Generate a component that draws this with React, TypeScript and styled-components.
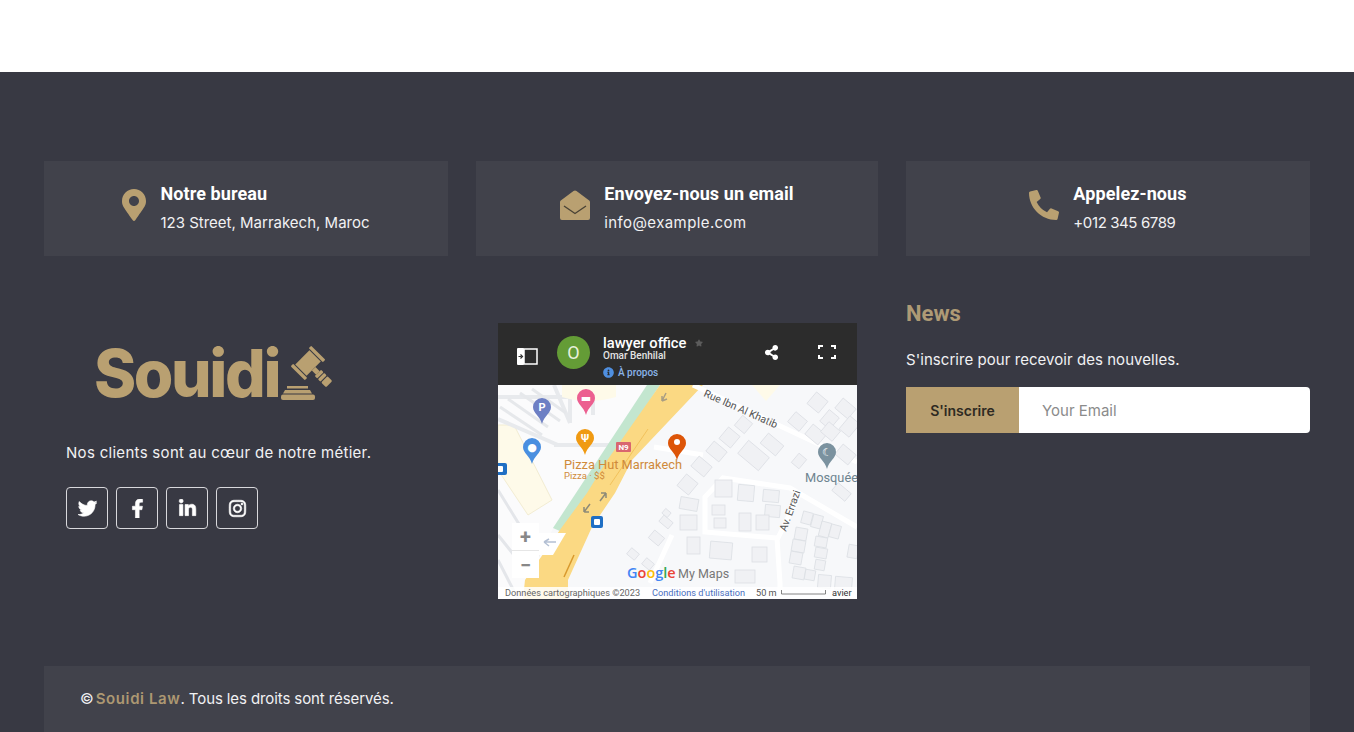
import React from 'react';
import styled, {createGlobalStyle} from 'styled-components';
import {
  FaMapMarkerAlt,
  FaPhoneAlt,
  FaTwitter,
  FaFacebookF,
  FaLinkedinIn,
  FaInstagram,
  FaStar,
  FaShareAlt,
  FaInfoCircle,
} from 'react-icons/fa';

const GOLD = '#b9a071';

const MailIcon: React.FC = () => (
  <svg width="30" height="30" viewBox="0 0 30 30">
    <path
      d="M13.500 1 .8 10.500Q0 11 0 12V28q0 2 2 2H28q2 0 2-2V12q0-1-.8-1.500L16.500 1Q15 0 13.500 1Z"
      fill={GOLD}
    />
    <path d="M4 16 15 23.500 26 16" fill="none" stroke="#4a4336" strokeWidth="1.400" />
  </svg>
);

const infoItems = [
  {icon: <FaMapMarkerAlt size={32} />, iconWidth: 24, title: 'Notre bureau', text: '123 Street, Marrakech, Maroc', spacing: 0},
  {icon: <MailIcon />, iconWidth: 30, title: 'Envoyez-nous un email', text: 'info@example.com', spacing: 0.4},
  {icon: <FaPhoneAlt size={30} />, iconWidth: 30, title: 'Appelez-nous', text: '+012 345 6789', spacing: -0.4},
];

// buildings of the map: x, y, w, h, rotation
const buildings = [
  [217, 95, 17, 17, 0], [240, 100, 16, 16, 5], [265, 105, 16, 12, 5], [267, 120, 15, 12, 5], [214, 120, 13, 10, 0],
  [216, 133, 12, 10, 0], [241, 128, 12, 18, 0], [258, 130, 13, 15, 0], [182, 130, 17, 15, 0], [182, 113, 18, 12, 10],
  [182, 92, 15, 15, 40], [195, 75, 17, 13, 40], [212, 157, 22, 17, 5], [254, 162, 15, 15, 0], [189, 152, 13, 17, 0],
  [152, 148, 13, 10, 40], [162, 133, 12, 8, 40], [165, 125, 7, 6, 40], [237, 185, 20, 13, 0],
  [304, 127, 10, 12, 15], [314, 130, 10, 13, 15], [322, 137, 10, 15, 15], [332, 140, 10, 13, 15], [297, 143, 12, 12, 10],
  [294, 155, 13, 12, 10], [292, 167, 12, 12, 10], [317, 152, 12, 10, 10], [317, 163, 12, 10, 10], [317, 175, 10, 10, 10],
  [295, 182, 12, 12, 10], [307, 185, 10, 10, 10], [320, 190, 13, 13, 5], [337, 192, 17, 13, 5], [350, 160, 10, 13, 10],
  [335, 102, 17, 10, 40], [224, 45, 15, 15, 40], [210, 60, 17, 13, 40], [239, 33, 13, 13, 40], [264, 53, 20, 13, 40],
  [242, 62, 27, 17, 40], [292, 30, 15, 13, 40], [312, 10, 15, 15, 40], [339, 17, 17, 13, 40], [325, 27, 13, 15, 40],
  [309, 43, 17, 13, 40], [325, 40, 15, 13, 40], [345, 33, 13, 17, 40], [339, 63, 17, 13, 40], [296, 70, 10, 12, 40],
  [130, 165, 10, 8, 40], [145, 175, 10, 8, 40],
];

const Pin: React.FC<{x: number; y: number; color: string; glyph?: string}> = ({x, y, color, glyph}) => (
  <g transform={`translate(${x} ${y})`}>
    <path d="M0 17C-2 9-9 6-9 0a9 9 0 0 1 18 0C9 6 2 9 0 17Z" fill={color} />
    {glyph ? (
      <MapGlyph x="0" y="4" fill="#fff">
        {glyph}
      </MapGlyph>
    ) : (
      <circle cx="0" cy="-1" r="3" fill="#fff" />
    )}
  </g>
);

const MapDrawing: React.FC = () => (
  <MapSvg viewBox="0 0 359 214">
    <rect width="359" height="214" fill="#f7f8fa" />
    {/* left block with parking */}
    <path d="M0 0H149L55 143 25 214H0Z" fill="#fbfbfc" />
    <path d="M0 40 16 40 54 115 30 130 0 85Z" fill="#fefae9" stroke="#f2ecd2" />
    <path d="M0 12H72V38M95 0V30M0 34 60 60M56 0 72 38M56 60H125" fill="none" stroke="#e8eaed" strokeWidth="4" />
    <path d="M0 105 40 170 30 214M0 175 20 214M0 150 32 190" fill="none" stroke="#e4e6ea" strokeWidth="3" />
    <path d="M10 14 50 42M22 8 62 36M34 4 68 28M2 22 44 50" stroke="#e6e8eb" strokeWidth="3" fill="none" />
    <path d="M64 0H118V12Q90 20 64 12Z" fill="#fefae9" />
    <path d="M254 0H282L268 16Z" fill="#fefae9" />
    {/* green strip and yellow road */}
    <path d="M149 0H162L64 147 55 143Z" fill="#c3e6cf" />
    <path d="M162 0H205L134 75 117 108 94 142 70 195V214H25L27 195 64 142 89 108 108 77Z" fill="#fbd983" />
    <path d="M150 44 112 100" stroke="#f2c25c" strokeWidth="1" />
    <path d="M76 170 66 192" stroke="#d8992d" strokeWidth="1.500" />
    <path d="M168 8 164 16M164 16l0-5M164 16l5-2" stroke="#a89d83" strokeWidth="1.500" fill="none" />
    <path d="M92 119 86 127M86 127h5M86 127v-5M102 116 108 108M108 108h-5M108 108v5" stroke="#8d8a78" strokeWidth="1.500" fill="none" />
    {/* right side roads */}
    <path d="M195 0 359 77M156 62 205 70" fill="none" stroke="#fff" strokeWidth="5" />
    <path d="M359 142 292 103 225 93 207 112V147L279 153 282 198V214M279 155 302 108M152 198 174 150" fill="none" stroke="#fff" strokeWidth="5" />
    <path d="M40 148H68L55 170H40Z" fill="#fff" />
    <path d="M46 157h12M46 157l5-3M46 157l5 4" stroke="#b4c0d4" strokeWidth="1.500" fill="none" />
    {buildings.map(([x, y, w, h, r], i) => (
      <rect
        key={i}
        x={x}
        y={y}
        width={w}
        height={h}
        transform={`rotate(${r} ${x + w / 2} ${y + h / 2})`}
        fill="#f0f1f4"
        stroke="#dcdfe4"
        strokeWidth="0.800"
      />
    ))}
    <Pin x={44} y={22} color="#6d7fc4" glyph="P" />
    <Pin x={88} y={13} color="#ec5f90" glyph="▬" />
    <Pin x={87} y={53} color="#f09a12" glyph="Ψ" />
    <Pin x={34} y={62} color="#4a8fe0" glyph="●" />
    <Pin x={179} y={58} color="#dd5508" />
    <Pin x={329} y={67} color="#7b929f" glyph="☾" />
    <rect x="-4" y="78" width="13" height="12" rx="2" fill="#1f6fc4" />
    <rect x="-1" y="81" width="6" height="6" rx="1" fill="#fff" />
    <rect x="93" y="131" width="12" height="12" rx="2" fill="#1f6fc4" />
    <rect x="96" y="134" width="6" height="6" rx="1" fill="#fff" />
    <rect x="118" y="57" width="15" height="10" rx="1" fill="#d9666f" />
    <BadgeText x="125.500" y="65" fill="#fff">
      N9
    </BadgeText>
    <PlaceLabel x="66" y="84" fill="#cf8a3a">
      Pizza Hut Marrakech
    </PlaceLabel>
    <SubLabel x="66" y="94" fill="#cf8a3a">
      Pizza · $$
    </SubLabel>
    <RoadLabel transform="translate(205 11) rotate(24)">Rue Ibn Al Khatib</RoadLabel>
    <RoadLabel transform="translate(288 147) rotate(-70)">Av. Errazi</RoadLabel>
    <PlaceLabel x="307" y="97" fill="#6e8490">
      Mosquée
    </PlaceLabel>
    <GoogleLabel x="129" y="193">
      <tspan fill="#4285f4">G</tspan>
      <tspan fill="#ea4335">o</tspan>
      <tspan fill="#fbbc05">o</tspan>
      <tspan fill="#4285f4">g</tspan>
      <tspan fill="#34a853">l</tspan>
      <tspan fill="#ea4335">e</tspan>
    </GoogleLabel>
    <MyMapsLabel x="180" y="193">
      My Maps
    </MyMapsLabel>
    <rect y="202" width="359" height="12" fill="#ffffff" opacity="0.850" />
    <AttrLabel x="7" y="210.500" fill="#666">
      Données cartographiques ©2023
    </AttrLabel>
    <AttrLabel x="154" y="210.500" fill="#4a6fc0">
      Conditions d'utilisation
    </AttrLabel>
    <AttrLabel x="258" y="210.500" fill="#555">
      50 m
    </AttrLabel>
    <path d="M283.500 205v4h44v-4" fill="none" stroke="#666" strokeWidth="0.800" />
    <AttrLabel x="334" y="210.500" fill="#333">
      avier
    </AttrLabel>
  </MapSvg>
);

export default function App() {
  return (
    <>
      <GlobalStyle />
      <TopSpace />
      <Footer>
        <InfoRow>
          {infoItems.map((item) => (
            <InfoCard key={item.title}>
              <InfoIcon $width={item.iconWidth}>{item.icon}</InfoIcon>
              <div>
                <InfoTitle>{item.title}</InfoTitle>
                <InfoText $spacing={item.spacing}>{item.text}</InfoText>
              </div>
            </InfoCard>
          ))}
        </InfoRow>

        <MainRow>
          <BrandCol>
            <Logo>
              <LogoText>Souidi</LogoText>
              <svg width="52" height="54" viewBox="0 0 52 54">
                <g fill={GOLD}>
                  <g transform="translate(27 17) rotate(-45)">
                    <rect x="-10" y="-8" width="20" height="16" />
                    <rect x="-14.500" y="-10" width="3.500" height="20" rx="1" />
                    <rect x="11" y="-10" width="3.500" height="20" rx="1" />
                    <rect x="-2.500" y="8" width="5" height="6" />
                    <rect x="-4.500" y="14" width="9" height="3.500" rx="1" />
                    <rect x="-4.500" y="18.500" width="9" height="3.500" rx="1" />
                    <rect x="-4.500" y="23" width="9" height="7" rx="1.500" />
                  </g>
                  <rect x="6" y="40" width="21" height="2.500" />
                  <path d="M4 44H29L31 47.500H2Z" />
                  <rect x="0" y="48.500" width="34" height="5.500" rx="2" />
                </g>
              </svg>
            </Logo>
            <BrandText>Nos clients sont au cœur de notre métier.</BrandText>
            <Socials>
              <SocialButton href="#"><FaTwitter /></SocialButton>
              <SocialButton href="#"><FaFacebookF /></SocialButton>
              <SocialButton href="#"><FaLinkedinIn /></SocialButton>
              <SocialButton href="#"><FaInstagram /></SocialButton>
            </Socials>
          </BrandCol>

          <MapCol>
            <MapFrame>
              <MapHeader>
                <PanelIcon width="21" height="17" viewBox="0 0 21 17">
                  <rect x="7" y="1" width="13" height="15" fill="none" stroke="#fff" strokeWidth="1.500" />
                  <rect x="0" y="0" width="7" height="17" rx="1" fill="#fff" />
                  <path d="M1.500 8.500h3M3.500 6.500l2 2-2 2" fill="none" stroke="#2c2c2c" strokeWidth="1.200" />
                </PanelIcon>
                <Avatar>O</Avatar>
                <MapMeta>
                  <MapTitleLine>
                    <MapTitle>lawyer office</MapTitle>
                    <FaStar size={8} color="#5c5c5c" />
                  </MapTitleLine>
                  <MapAuthor>Omar Benhilal</MapAuthor>
                  <MapAbout>
                    <FaInfoCircle size={11} color="#4f8fe0" />À propos
                  </MapAbout>
                </MapMeta>
                <MapActions>
                  <FaShareAlt size={15} color="#fff" />
                  <svg width="18" height="14" viewBox="0 0 18 14">
                    <path d="M1 4V1H5M13 1H17V4M17 10V13H13M5 13H1V10" fill="none" stroke="#fff" strokeWidth="2" />
                  </svg>
                </MapActions>
              </MapHeader>
              <MapBody>
                <MapDrawing />
                <ZoomControl>
                  <ZoomButton>+</ZoomButton>
                  <ZoomButton>−</ZoomButton>
                </ZoomControl>
              </MapBody>
            </MapFrame>
          </MapCol>

          <NewsCol>
            <NewsTitle>News</NewsTitle>
            <NewsText>S'inscrire pour recevoir des nouvelles.</NewsText>
            <SubscribeForm>
              <SubscribeButton type="button">S'inscrire</SubscribeButton>
              <EmailInput placeholder="Your Email" />
            </SubscribeForm>
          </NewsCol>
        </MainRow>

        <CopyBar>
          © <CopyBrand>Souidi Law</CopyBrand>. Tous les droits sont réservés.
        </CopyBar>
      </Footer>
    </>
  );
}

const GlobalStyle = createGlobalStyle`
  html, body {
    margin: 0;
    background: #fff;
    overflow: hidden;
  }
  * {
    box-sizing: border-box;
  }
`;

const TopSpace = styled.div`
  height: 72px;
  background: #fff;
`;

const Footer = styled.footer`
  height: 660px;
  padding: 89px 44px 0;
  background: #383943;
  font-family: Inter, 'Open Sans', sans-serif;
  color: #fff;
`;

const InfoRow = styled.div`
  display: grid;
  grid-template-columns: 404px 402px 404px;
  gap: 28px;
`;

const InfoCard = styled.div`
  display: flex;
  align-items: center;
  justify-content: center;
  gap: 14px;
  height: 95px;
  background: #41424b;
`;

const InfoIcon = styled.div<{$width: number}>`
  display: flex;
  align-items: center;
  justify-content: center;
  width: ${(props) => props.$width}px;
  margin-bottom: 8px;
  color: ${GOLD};
`;

const InfoTitle = styled.div`
  margin-bottom: 7px;
  font-family: Roboto, sans-serif;
  font-size: 18px;
  font-weight: 700;
  letter-spacing: 0.1px;
  line-height: 22px;
`;

const InfoText = styled.div<{$spacing: number}>`
  font-size: 15px;
  letter-spacing: ${(props) => props.$spacing}px;
  line-height: 22px;
  color: #f1f1f3;
`;

const MainRow = styled.div`
  display: grid;
  grid-template-columns: 404px 402px 404px;
  gap: 28px;
  height: 410px;
  padding-top: 45px;
`;

const BrandCol = styled.div`
  padding: 43px 22px 0;
`;

const Logo = styled.div`
  display: flex;
  align-items: center;
  gap: 6px;
  height: 58px;
  margin-left: 28px;
`;

const LogoText = styled.span`
  display: inline-block;
  width: 181px;
  font-family: Inter, sans-serif;
  font-size: 66px;
  font-weight: 800;
  letter-spacing: -2.500px;
  line-height: 58px;
  color: ${GOLD};
  transform: scaleX(0.97);
  transform-origin: left center;
  white-space: nowrap;
`;

const BrandText = styled.p`
  margin: 40px 0 23px;
  font-size: 15px;
  letter-spacing: 0.3px;
  line-height: 22px;
  color: #f1f1f3;
`;

const Socials = styled.div`
  display: flex;
  gap: 8px;
`;

const SocialButton = styled.a`
  display: flex;
  align-items: center;
  justify-content: center;
  width: 42px;
  height: 42px;
  border: 1px solid #d8d8dc;
  border-radius: 4px;
  color: #fff;
  font-size: 19px;
  svg {
    stroke-width: 16;
  }
`;

const MapCol = styled.div`
  padding: 22px 21px 0 22px;
`;

const MapFrame = styled.div`
  width: 359px;
  height: 276px;
  background: #fff;
`;

const MapHeader = styled.div`
  display: flex;
  align-items: center;
  height: 62px;
  padding: 0 21px 0 19px;
  background: #2c2c2c;
`;

const PanelIcon = styled.svg`
  flex: none;
  margin-top: 4px;
`;

const Avatar = styled.div`
  display: flex;
  align-items: center;
  justify-content: center;
  flex: none;
  width: 33px;
  height: 33px;
  margin: -4px 13px 0 19px;
  border-radius: 50%;
  background: #649c36;
  font-family: Roboto, sans-serif;
  font-size: 18px;
  color: #e8f0dc;
`;

const MapMeta = styled.div`
  flex: 1;
  margin-top: 5px;
  font-family: Roboto, sans-serif;
`;

const MapTitleLine = styled.div`
  display: flex;
  align-items: center;
  gap: 9px;
`;

const MapTitle = styled.span`
  font-size: 14.700px;
  font-weight: 500;
  line-height: 16px;
`;

const MapAuthor = styled.div`
  font-size: 10px;
  font-weight: 500;
  line-height: 10px;
  color: #e4e4e4;
`;

const MapAbout = styled.div`
  display: flex;
  align-items: center;
  gap: 4px;
  margin-top: 6px;
  font-size: 10px;
  font-weight: 500;
  line-height: 12px;
  color: #8ab4e8;
`;

const MapActions = styled.div`
  display: flex;
  align-items: center;
  gap: 39px;
  margin-top: -4px;
`;

const MapBody = styled.div`
  position: relative;
  height: 214px;
  overflow: hidden;
`;

const MapSvg = styled.svg`
  display: block;
  width: 359px;
  height: 214px;
`;

const MapGlyph = styled.text`
  font-family: Roboto, 'DejaVu Sans', sans-serif;
  font-size: 11px;
  font-weight: 700;
  text-anchor: middle;
`;

const BadgeText = styled.text`
  font-family: Roboto, sans-serif;
  font-size: 8px;
  font-weight: 700;
  text-anchor: middle;
`;

const PlaceLabel = styled.text`
  font-family: Roboto, sans-serif;
  font-size: 12.800px;
`;

const SubLabel = styled.text`
  font-family: Roboto, sans-serif;
  font-size: 9.500px;
`;

const RoadLabel = styled.text`
  font-family: Roboto, sans-serif;
  font-size: 10.500px;
  fill: #555;
`;

const GoogleLabel = styled.text`
  font-family: 'Open Sans', sans-serif;
  font-size: 14.500px;
  font-weight: 600;
`;

const MyMapsLabel = styled.text`
  font-family: Roboto, sans-serif;
  font-size: 12.500px;
  fill: #777;
`;

const AttrLabel = styled.text`
  font-family: Roboto, sans-serif;
  font-size: 9.200px;
`;

const ZoomControl = styled.div`
  position: absolute;
  left: 14px;
  top: 138px;
  display: flex;
  flex-direction: column;
  gap: 1px;
  width: 27px;
  background: #e6e6e6;
`;

const ZoomButton = styled.div`
  display: flex;
  align-items: center;
  justify-content: center;
  height: 27px;
  background: #fff;
  font-family: Roboto, sans-serif;
  font-size: 20px;
  font-weight: 700;
  color: #888;
`;

const NewsCol = styled.div`
  min-width: 0;
`;

const NewsTitle = styled.h4`
  margin: 0 0 22px;
  font-family: Roboto, sans-serif;
  font-size: 22px;
  font-weight: 700;
  line-height: 26px;
  color: #ae9a75;
`;

const NewsText = styled.p`
  margin: 0 0 16px;
  font-size: 15px;
  letter-spacing: 0.05px;
  line-height: 22px;
  color: #f1f1f3;
`;

const SubscribeForm = styled.div`
  display: flex;
  height: 46px;
`;

const SubscribeButton = styled.button`
  flex: none;
  width: 113px;
  border: 0;
  background: ${GOLD};
  font-family: Inter, sans-serif;
  font-size: 14px;
  font-weight: 600;
  color: #2e2a22;
`;

const EmailInput = styled.input`
  flex: 1;
  min-width: 0;
  padding: 0 23px;
  border: 0;
  border-radius: 0 4px 4px 0;
  background: #fff;
  font-family: Inter, sans-serif;
  font-size: 15px;
  outline: none;
  &::placeholder {
    color: #8b8b8b;
  }
`;

const CopyBar = styled.div`
  height: 66px;
  padding: 22px 36px 0;
  background: #41424b;
  font-size: 15px;
  letter-spacing: -0.1px;
  line-height: 22px;
  color: #f1f1f3;
`;

const CopyBrand = styled.span`
  margin-left: -2px;
  font-weight: 600;
  letter-spacing: 0.6px;
  color: #ad9872;
`;
